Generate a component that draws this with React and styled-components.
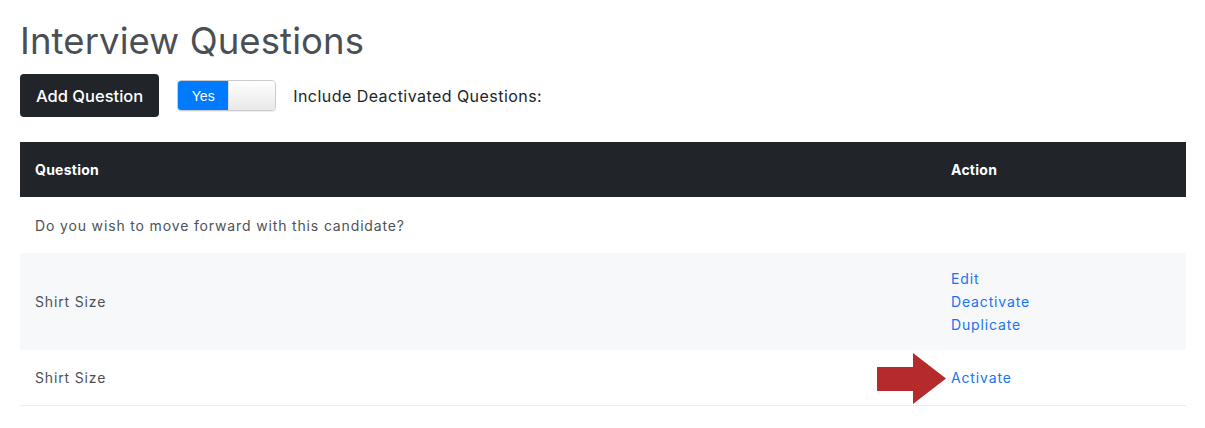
import React from "react";
import styled, { createGlobalStyle } from "styled-components";

const Global = createGlobalStyle`
  html, body { margin: 0; padding: 0; background: #fff; }
  body { font-family: Inter, "Open Sans", sans-serif; color: #212529; }
`;

const Page = styled.div`
  position: relative;
  padding: 17px 19px 0 20px;
  width: 1166px;
`;

const Title = styled.h1`
  margin: 0;
  font-size: 36.5px;
  font-weight: 400;
  line-height: 48px;
  letter-spacing: 0.1px;
  color: #4a4f55;
`;

const Toolbar = styled.div`
  display: flex;
  align-items: center;
  margin-top: 9px;
  height: 43px;
`;

const DarkButton = styled.button`
  height: 43px;
  padding: 0 16px;
  border: none;
  border-radius: 4px;
  background: #212529;
  color: #fff;
  font-family: inherit;
  font-size: 16.5px;
  font-weight: 500;
`;

const Toggle = styled.div`
  display: flex;
  margin-left: 18px;
  width: 99px;
  height: 31px;
  border: 1px solid #ccc;
  border-radius: 4px;
  overflow: hidden;
  box-sizing: border-box;
  box-shadow: 0 1px 1px rgba(0,0,0,0.08);
`;

const ToggleOn = styled.div`
  width: 50px;
  background: #007bff;
  color: #fff;
  font-family: "Liberation Sans", Arial, sans-serif;
  font-size: 14px;
  display: flex;
  align-items: center;
  justify-content: center;
`;

const ToggleHandle = styled.div`
  flex: 1;
  background: linear-gradient(#fff, #e8e8e8);
  border-left: 1px solid #ddd;
`;

const ToggleLabel = styled.span`
  margin-left: 17px;
  font-size: 16px;
  letter-spacing: 0.45px;
  color: #212529;
`;

const Table = styled.div`
  margin-top: 25px;
  display: grid;
  grid-template-columns: 916px 1fr;
  font-size: 14px;
  letter-spacing: 0.85px;
`;

const HeadCell = styled.div`
  background: #212529;
  color: #fff;
  font-weight: 700;
  letter-spacing: 0.25px;
  height: 55px;
  padding: 0 15px;
  display: flex;
  align-items: center;
`;

const Cell = styled.div`
  background: ${p => (p.$striped ? "#f7f8fa" : "#fff")};
  color: #4e5257;
  height: ${p => p.$h}px;
  padding: 0 15px;
  display: flex;
  flex-direction: column;
  justify-content: center;
  line-height: 23px;
  box-sizing: border-box;
  border-bottom: ${p => (p.$last ? "1px solid #eceef0" : "none")};
`;

const ActionLink = styled.a`
  color: #1a73f0;
  text-decoration: none;
  cursor: pointer;
`;

const Arrow = styled.svg`
  position: absolute;
  left: 877px;
  top: 353px;
`;

const rows = [
  { q: "Do you wish to move forward with this candidate?", actions: [], h: 56 },
  { q: "Shirt Size", actions: ["Edit", "Deactivate", "Duplicate"], h: 97, striped: true },
  { q: "Shirt Size", actions: ["Activate"], h: 56, last: true },
];

export default function App() {
  return (
    <>
      <Global />
      <Page>
        <Title>Interview Questions</Title>
        <Toolbar>
          <DarkButton>Add Question</DarkButton>
          <Toggle>
            <ToggleOn>Yes</ToggleOn>
            <ToggleHandle />
          </Toggle>
          <ToggleLabel>Include Deactivated Questions:</ToggleLabel>
        </Toolbar>
        <Table>
          <HeadCell>Question</HeadCell>
          <HeadCell>Action</HeadCell>
          {rows.map((r, i) => (
            <React.Fragment key={i}>
              <Cell $h={r.h} $striped={r.striped} $last={r.last}>{r.q}</Cell>
              <Cell $h={r.h} $striped={r.striped} $last={r.last}>
                {r.actions.map(a => (
                  <ActionLink key={a}>{a}</ActionLink>
                ))}
              </Cell>
            </React.Fragment>
          ))}
        </Table>
        <Arrow width="70" height="52" viewBox="0 0 70 52">
          <polygon points="0,14 36,14 36,0 69,25.5 36,51 36,38 0,38" fill="#b52a2a" />
        </Arrow>
      </Page>
    </>
  );
}
